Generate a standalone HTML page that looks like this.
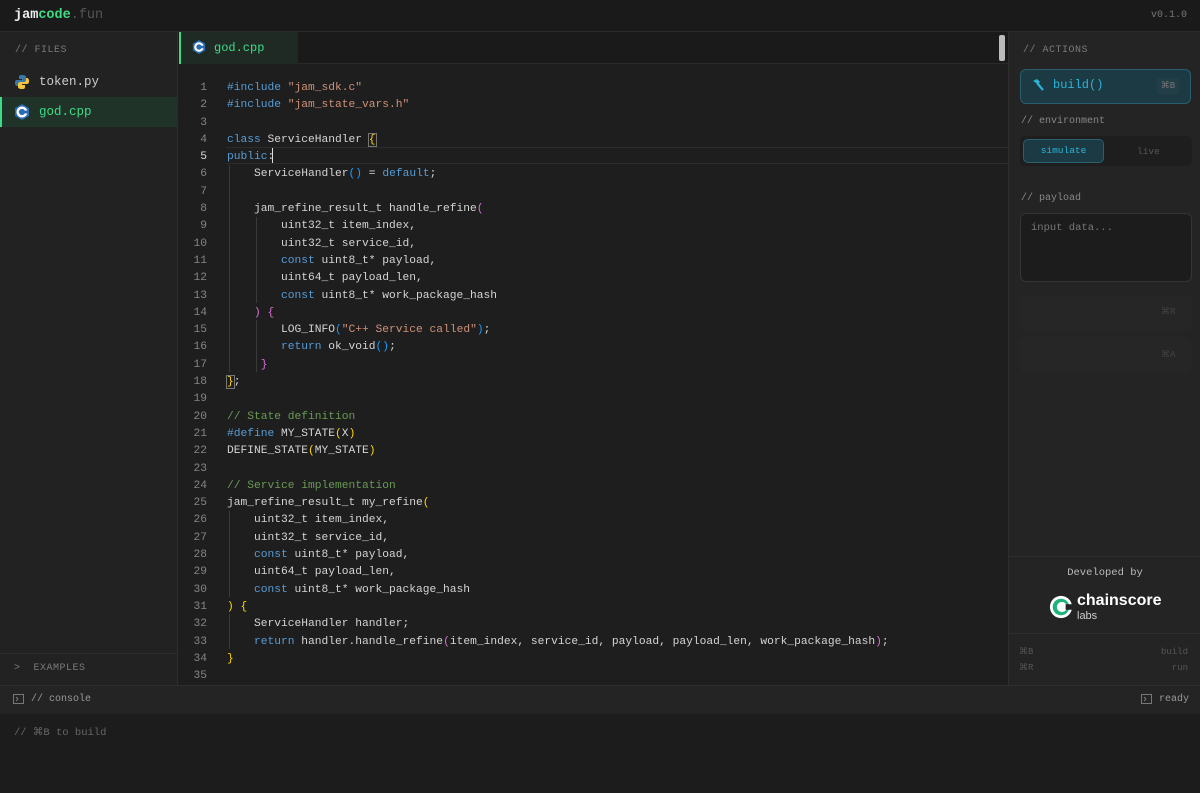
<!DOCTYPE html>
<html><head><meta charset="utf-8"><style>
*{margin:0;padding:0;box-sizing:border-box}
body{width:1200px;height:793px;background:#1e1e1e;font-family:"Liberation Mono",monospace;color:#d4d4d4;position:relative;overflow:hidden}
.abs{position:absolute}
#top{left:0;top:0;width:1200px;height:32px;background:#1a1a1a;border-bottom:1px solid #2c2c2c}
#side{left:0;top:32px;width:178px;height:653px;background:#222;border-right:1px solid #2e2e2e}
#tabs{left:179px;top:32px;width:829px;height:32px;background:#1a1a1a;border-bottom:1px solid #2a2a2a}
#right{left:1008px;top:32px;width:192px;height:653px;background:#242424;border-left:1px solid #2e2e2e}
#conh{left:0;top:685px;width:1200px;height:29px;background:#242424;border-top:1px solid #2e2e2e}
#conb{left:0;top:714px;width:1200px;height:79px;background:#1c1c1c}
.small{font-size:10px;color:#7a7a7a;letter-spacing:.5px}
pre{font-family:"Liberation Mono",monospace;font-size:11.25px;line-height:17.3px;white-space:pre}
.k{color:#569cd6}.s{color:#ce9178}.c{color:#6a9955}.y{color:#ffd700}.p{color:#da70d6}.b{color:#179fff}
.gut{color:#858585;text-align:right;width:28px}
</style></head><body>
<div id="top" class="abs">
 <div class="abs" style="left:14px;top:8px;font-size:13.5px;font-weight:bold;color:#eee">jam<span style="color:#3ddc84">code</span><span style="color:#555;font-weight:normal">.fun</span></div>
 <div class="abs" style="right:13px;top:10px;font-size:10px;color:#777">v0.1.0</div>
</div>
<div id="side" class="abs">
 <div class="abs small" style="left:15px;top:13px">// FILES</div>
 <svg class="abs" style="left:14px;top:42px" width="16" height="16" viewBox="0 0 16 16"><path d="M8 1c-3 0-3 1-3 2v2h3v1H3C1 6 1 8 1 9c0 2 1 3 2 3h1v-2c0-1 1-2 2-2h4c1 0 2-1 2-2V3c0-1-1-2-4-2z" fill="#3b77a8"/><path d="M8 15c3 0 3-1 3-2v-2H8v-1h5c2 0 2-2 2-3 0-2-1-3-2-3h-1v2c0 1-1 2-2 2H6c-1 0-2 1-2 2v3c0 1 1 2 4 2z" fill="#f2c53d"/></svg>
 <div class="abs" style="left:39px;top:43px;font-size:12.5px;color:#ccc">token.py</div>
 <div class="abs" style="left:0;top:65px;width:178px;height:30px;background:#1f3329;border-left:2px solid #3ddc84"></div>
 <svg class="abs" style="left:14px;top:72px" width="16" height="16" viewBox="0 0 16 16"><polygon points="8,0 15,4 15,12 8,16 1,12 1,4" fill="#2b6cb0"/><circle cx="8" cy="8" r="4.3" fill="none" stroke="#fff" stroke-width="2.4"/><rect x="9" y="6.5" width="5" height="3" fill="#2b6cb0"/></svg>
 <div class="abs" style="left:39px;top:73px;font-size:12.5px;color:#3ddc84">god.cpp</div>
 <div class="abs" style="left:0;top:621px;width:178px;border-top:1px solid #2e2e2e"></div>
 <div class="abs small" style="left:14px;top:631px">&gt;&nbsp; EXAMPLES</div>
</div>
<div id="tabs" class="abs">
 <div class="abs" style="left:0;top:0;width:119px;height:32px;background:#1f2a24;border-left:2px solid #3ddc84"></div>
 <svg class="abs" style="left:13px;top:8px" width="14" height="14" viewBox="0 0 16 16"><polygon points="8,0 15,4 15,12 8,16 1,12 1,4" fill="#2b6cb0"/><circle cx="8" cy="8" r="4.3" fill="none" stroke="#fff" stroke-width="2.4"/><rect x="9" y="6.5" width="5" height="3" fill="#2b6cb0"/></svg>
 <div class="abs" style="left:35px;top:9px;font-size:12px;color:#3ddc84">god.cpp</div>
</div>
<div class="abs" style="left:999px;top:35px;width:6px;height:26px;background:#bbb;border-radius:2px"></div>
<div class="abs" style="left:226px;top:147px;width:782px;height:17px;border-top:1px solid #2c2c2c;border-bottom:1px solid #2c2c2c"></div>
<div class="abs" style="left:272px;top:148px;width:1px;height:15px;background:#ddd"></div>
<div class="abs" style="left:229px;top:165px;width:1px;height:207px;background:#3a3a3a"></div>
<div class="abs" style="left:256px;top:217px;width:1px;height:86px;background:#3a3a3a"></div>
<div class="abs" style="left:256px;top:320px;width:1px;height:52px;background:#3a3a3a"></div>
<div class="abs" style="left:229px;top:511px;width:1px;height:86px;background:#3a3a3a"></div>
<div class="abs" style="left:229px;top:614px;width:1px;height:35px;background:#3a3a3a"></div>
<pre class="abs gut" style="left:179px;top:80px">1
2
3
4
<span style="color:#ddd">5</span>
6
7
8
9
10
11
12
13
14
15
16
17
18
19
20
21
22
23
24
25
26
27
28
29
30
31
32
33
34
35</pre>
<pre class="abs" style="left:227px;top:80px"><span class="k">#include</span> <span class="s">"jam_sdk.c"</span>
<span class="k">#include</span> <span class="s">"jam_state_vars.h"</span>

<span class="k">class</span> ServiceHandler <span class="y" style="outline:1px solid #777">{</span>
<span class="k">public</span>:
    ServiceHandler<span class="b">()</span> = <span class="k">default</span>;

    jam_refine_result_t handle_refine<span class="p">(</span>
        uint32_t item_index,
        uint32_t service_id,
        <span class="k">const</span> uint8_t* payload,
        uint64_t payload_len,
        <span class="k">const</span> uint8_t* work_package_hash
    <span class="p">) {</span>
        LOG_INFO<span class="b">(</span><span class="s">"C++ Service called"</span><span class="b">)</span>;
        <span class="k">return</span> ok_void<span class="b">()</span>;
    <span class="p"> }</span>
<span class="y" style="outline:1px solid #777">}</span>;

<span class="c">// State definition</span>
<span class="k">#define</span> MY_STATE<span class="y">(</span>X<span class="y">)</span>
DEFINE_STATE<span class="y">(</span>MY_STATE<span class="y">)</span>

<span class="c">// Service implementation</span>
jam_refine_result_t my_refine<span class="y">(</span>
    uint32_t item_index,
    uint32_t service_id,
    <span class="k">const</span> uint8_t* payload,
    uint64_t payload_len,
    <span class="k">const</span> uint8_t* work_package_hash
<span class="y">) {</span>
    ServiceHandler handler;
    <span class="k">return</span> handler.handle_refine<span class="p">(</span>item_index, service_id, payload, payload_len, work_package_hash<span class="p">)</span>;
<span class="y">}</span>
</pre>
<div id="right" class="abs">
 <div class="abs small" style="left:14px;top:13px">// ACTIONS</div>
 <div class="abs" style="left:11px;top:37px;width:171px;height:35px;background:#1c3a44;border:1px solid #2a5d6c;border-radius:6px"></div>
 <svg class="abs" style="left:22px;top:46px" width="14" height="14" viewBox="0 0 14 14"><path d="M2 3l4-2 3 3-2 2z" fill="#2bb5d8"/><path d="M6 5l6 7" stroke="#2bb5d8" stroke-width="2.2"/></svg>
 <div class="abs" style="left:44px;top:46px;font-size:12px;color:#2bb5d8">build()</div>
 <div class="abs" style="left:148px;top:46px;width:22px;height:16px;background:#243e47;border-radius:3px;font-size:9px;color:#777;text-align:center;line-height:16px">⌘B</div>
 <div class="abs" style="left:12px;top:84px;font-size:10px;color:#888">// environment</div>
 <div class="abs" style="left:11px;top:104px;width:172px;height:30px;background:#1e1e1e;border-radius:5px"></div>
 <div class="abs" style="left:14px;top:107px;width:81px;height:24px;background:#1c3a44;border:1px solid #2a6070;border-radius:5px;font-size:9.5px;color:#2bb5d8;text-align:center;line-height:22px">simulate</div>
 <div class="abs" style="left:128px;top:114px;font-size:9.5px;color:#555">live</div>
 <div class="abs" style="left:12px;top:161px;font-size:10px;color:#888">// payload</div>
 <div class="abs" style="left:11px;top:181px;width:172px;height:69px;background:#1c1c1c;border:1px solid #353535;border-radius:6px"></div>
 <div class="abs" style="left:22px;top:190px;font-size:10.5px;color:#777">input data...</div>
 <div class="abs" style="left:11px;top:263px;width:172px;height:36px;background:#262626;border-radius:6px"></div>
 <div class="abs" style="left:152px;top:275px;font-size:9px;color:#444">⌘R</div>
 <div class="abs" style="left:11px;top:305px;width:172px;height:36px;background:#262626;border-radius:6px"></div>
 <div class="abs" style="left:152px;top:318px;font-size:9px;color:#444">⌘A</div>
 <div class="abs" style="left:0;top:524px;width:192px;border-top:1px solid #2e2e2e"></div>
 <div class="abs" style="left:0;top:535px;width:192px;text-align:center;font-size:10.5px;color:#bbb">Developed by</div>
 <svg class="abs" style="left:40px;top:563px" width="24" height="24" viewBox="0 0 26 26"><circle cx="13" cy="13" r="12" fill="#fff"/><circle cx="13" cy="13" r="9" fill="#1fb27a"/><circle cx="14" cy="13" r="5.5" fill="#fff"/><rect x="18" y="10" width="8" height="6" fill="#242424"/></svg>
 <div class="abs" style="left:68px;top:560px;font-family:'Liberation Sans',sans-serif;font-weight:bold;font-size:16px;color:#fff">chainscore</div>
 <div class="abs" style="left:68px;top:578px;font-family:'Liberation Sans',sans-serif;font-size:11px;color:#ccc">labs</div>
 <div class="abs" style="left:0;top:601px;width:192px;border-top:1px solid #2e2e2e"></div>
 <div class="abs" style="left:10px;top:615px;font-size:9px;color:#555">⌘B</div>
 <div class="abs" style="right:12px;top:615px;font-size:9px;color:#555">build</div>
 <div class="abs" style="left:10px;top:631px;font-size:9px;color:#555">⌘R</div>
 <div class="abs" style="right:12px;top:631px;font-size:9px;color:#555">run</div>
</div>
<div id="conh" class="abs">
 <svg class="abs" style="left:13px;top:8px" width="11" height="10"><rect x=".5" y=".5" width="10" height="9" fill="none" stroke="#777"/><path d="M3 3l2 2-2 2" stroke="#777" fill="none"/></svg>
 <div class="abs" style="left:31px;top:8px;font-size:10px;color:#999">// console</div>
 <svg class="abs" style="left:1141px;top:8px" width="11" height="10"><rect x=".5" y=".5" width="10" height="9" fill="none" stroke="#777"/><path d="M3 3l2 2-2 2" stroke="#777" fill="none"/></svg>
 <div class="abs" style="left:1159px;top:8px;font-size:10px;color:#999">ready</div>
</div>
<div id="conb" class="abs">
 <div class="abs" style="left:14px;top:12px;font-size:10.5px;color:#666">// ⌘B to build</div>
</div>
</body></html>
